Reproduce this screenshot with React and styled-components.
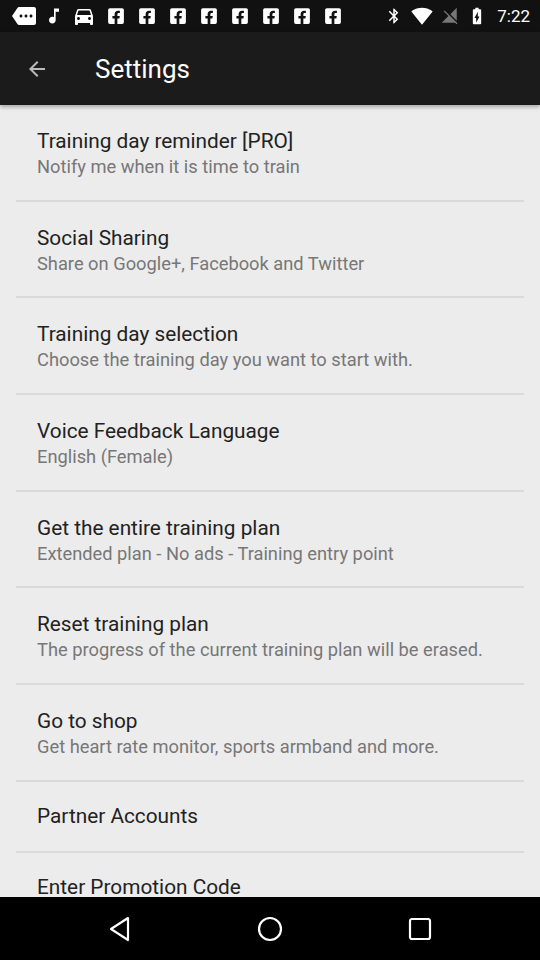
import React from "react";
import styled, { createGlobalStyle } from "styled-components";
import { FaFacebookSquare } from "react-icons/fa";
import {
  MdMore,
  MdDirectionsCar,
  MdBluetooth,
  MdSignalWifi4Bar,
  MdSignalCellularOff,
  MdBatteryChargingFull,
  MdArrowBack,
  MdMusicNote,
} from "react-icons/md";

const Global = createGlobalStyle`
  html, body { margin: 0; padding: 0; background: #ececec; }
  body { font-family: Roboto, "Noto Sans", sans-serif; }
`;

const Screen = styled.div`
  width: 540px;
  height: 960px;
  display: flex;
  flex-direction: column;
  background: #ececec;
  overflow: hidden;
`;

const StatusBar = styled.div`
  height: 32px;
  flex: none;
  background: #111111;
  display: flex;
  align-items: center;
  padding: 0 10px 0 12px;
  color: #fff;
`;

const StatusLeft = styled.div`
  display: flex;
  align-items: center;
  gap: 8px;
  flex: 1;
`;

const StatusRight = styled.div`
  display: flex;
  align-items: center;
  gap: 8px;
`;

const FbGroup = styled.div`
  display: flex;
  gap: 13px;
  margin-left: 3px;
`;

const Time = styled.span`
  font-family: Roboto, sans-serif;
  font-size: 17px;
  color: #fff;
  margin-left: 2px;
`;

const AppBar = styled.div`
  height: 73px;
  flex: none;
  background: #1b1b1b;
  display: flex;
  align-items: center;
  padding-left: 25px;
  box-shadow: 0 2px 4px rgba(0, 0, 0, 0.3);
  position: relative;
  z-index: 1;
`;

const Title = styled.div`
  color: #fff;
  font-size: 26px;
  margin-left: 46px;
`;

const Content = styled.div`
  flex: 1;
  overflow: hidden;
  padding: 0 16px;
`;

const Item = styled.div`
  padding: ${(p) => (p.$single ? "21px 21px 22.5px" : "23px 21px 21.7px")};
  border-bottom: ${(p) => (p.$last ? "none" : "2px solid #dadada")};
`;

const ItemTitle = styled.div`
  font-size: 20.8px;
  line-height: 26px;
  color: #222;
`;

const ItemSub = styled.div`
  font-size: 18.3px;
  line-height: 22px;
  color: #777;
  margin-top: 2px;
`;

const NavBar = styled.div`
  height: 63px;
  flex: none;
  background: #000;
  display: grid;
  grid-template-columns: 1fr 1fr 1fr;
  align-items: center;
  justify-items: center;
  padding: 0 45px;
`;

const items = [
  ["Training day reminder [PRO]", "Notify me when it is time to train"],
  ["Social Sharing", "Share on Google+, Facebook and Twitter"],
  ["Training day selection", "Choose the training day you want to start with."],
  ["Voice Feedback Language", "English (Female)"],
  ["Get the entire training plan", "Extended plan - No ads - Training entry point"],
  ["Reset training plan", "The progress of the current training plan will be erased."],
  ["Go to shop", "Get heart rate monitor, sports armband and more."],
  ["Partner Accounts"],
  ["Enter Promotion Code"],
];

export default function App() {
  return (
    <>
      <Global />
      <Screen>
        <StatusBar>
          <StatusLeft>
            <MdMore size={24} />
            <MdMusicNote size={20} />
            <MdDirectionsCar size={24} />
            <FbGroup>
              {Array.from({ length: 8 }).map((_, i) => (
                <FaFacebookSquare key={i} size={18} />
              ))}
            </FbGroup>
          </StatusLeft>
          <StatusRight>
            <MdBluetooth size={18} />
            <MdSignalWifi4Bar size={22} />
            <MdSignalCellularOff size={18} color="#777" />
            <MdBatteryChargingFull size={20} />
            <Time>7:22</Time>
          </StatusRight>
        </StatusBar>
        <AppBar>
          <MdArrowBack size={24} color="#bbbbbb" />
          <Title>Settings</Title>
        </AppBar>
        <Content>
          {items.map(([t, s], i) => (
            <Item key={t} $single={!s} $last={i === items.length - 1}>
              <ItemTitle>{t}</ItemTitle>
              {s && <ItemSub>{s}</ItemSub>}
            </Item>
          ))}
        </Content>
        <NavBar>
          <svg width="24" height="26" viewBox="0 0 24 26">
            <path d="M20 2 L3 13 L20 24 Z" fill="none" stroke="#fff" strokeWidth="2.2" strokeLinejoin="round" />
          </svg>
          <svg width="26" height="26" viewBox="0 0 26 26">
            <circle cx="13" cy="13" r="11" fill="none" stroke="#fff" strokeWidth="2.2" />
          </svg>
          <svg width="24" height="24" viewBox="0 0 24 24">
            <rect x="2" y="2" width="20" height="20" rx="2" fill="none" stroke="#fff" strokeWidth="2.2" />
          </svg>
        </NavBar>
      </Screen>
    </>
  );
}
